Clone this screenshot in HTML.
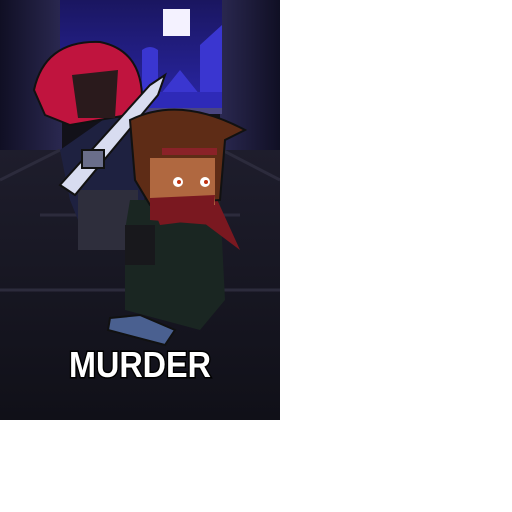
<html><head><style>body{margin:0;background:#fff;width:512px;height:512px;overflow:hidden}svg{position:absolute;left:0;top:0}</style></head><body>
<svg width="280" height="420" viewBox="0 0 280 420">
<defs>
<linearGradient id="sky" x1="0" y1="0" x2="0" y2="1"><stop offset="0" stop-color="#1a1660"/><stop offset="1" stop-color="#2a26a8"/></linearGradient>
<linearGradient id="wall" x1="0" y1="0" x2="1" y2="0"><stop offset="0" stop-color="#100f24"/><stop offset="1" stop-color="#2a2850"/></linearGradient>
<linearGradient id="wallr" x1="1" y1="0" x2="0" y2="0"><stop offset="0" stop-color="#100f24"/><stop offset="1" stop-color="#2a2850"/></linearGradient>
<linearGradient id="floor" x1="0" y1="0" x2="0" y2="1"><stop offset="0" stop-color="#1e1d2c"/><stop offset="1" stop-color="#101018"/></linearGradient>
</defs>
<rect width="280" height="420" fill="#121119"/>
<rect x="0" y="0" width="62" height="180" fill="url(#wall)"/>
<rect x="220" y="0" width="60" height="180" fill="url(#wallr)"/>
<rect x="60" y="0" width="162" height="110" fill="url(#sky)"/>
<path d="M142 95 V50 q8-6 16 0 V95 Z M200 95 V45 l22-20 V95 Z M160 95 l20-25 20 25Z" fill="#3a36d0"/>
<rect x="60" y="92" width="162" height="18" fill="#2e2ab8"/>
<rect x="163" y="9" width="27" height="27" fill="#f4f2ff"/>
<rect x="60" y="108" width="162" height="6" fill="#4a4680"/>
<rect x="0" y="150" width="280" height="270" fill="url(#floor)"/>
<path d="M0 180 L60 150 M280 180 L222 150 M0 290 H280 M40 215 H240" stroke="#2c2b3c" stroke-width="3" fill="none"/>
<path d="M60 150 L110 115 L150 130 L140 250 L90 250 L70 200 Z" fill="#1e2140"/>
<rect x="78" y="190" width="60" height="60" fill="#2e2e3c"/>
<path d="M34 90 Q45 40 100 42 Q140 50 142 95 L128 115 L70 125 L45 115 Z" fill="#c0143e" stroke="#111" stroke-width="2"/>
<path d="M72 75 L118 70 L115 118 L78 118 Z" fill="#2a1a1c"/>
<path d="M60 185 L150 85 L165 75 L158 95 L75 195 Z" fill="#d8dcf0" stroke="#111" stroke-width="2"/>
<rect x="82" y="150" width="22" height="18" fill="#6a6e8a" stroke="#111" stroke-width="2"/>
<path d="M130 200 L220 200 L225 300 L200 330 L125 310 L125 230 Z" fill="#1a2622"/>
<path d="M150 200 L215 195 L240 250 L200 220 L160 225 Z" fill="#7a1820"/>
<path d="M130 120 Q180 95 245 130 L225 140 L220 200 L150 205 L135 180 Z" fill="#5e2c16" stroke="#111" stroke-width="2"/>
<rect x="150" y="150" width="65" height="55" fill="#b06840"/>
<rect x="145" y="140" width="75" height="18" fill="#5e2c16"/>
<rect x="162" y="148" width="55" height="7" fill="#8a2228"/>
<path d="M150 198 L215 195 L212 225 L150 220 Z" fill="#7a1820"/>
<circle cx="178" cy="182" r="5" fill="#fff"/><circle cx="205" cy="182" r="5" fill="#fff"/>
<circle cx="179" cy="182" r="2" fill="#c03010"/><circle cx="206" cy="182" r="2" fill="#c03010"/>
<rect x="125" y="225" width="30" height="40" fill="#18181c"/>
<path d="M110 318 L140 315 L175 330 L165 345 L108 330 Z" fill="#4a6090" stroke="#111" stroke-width="2"/>
<text x="140" y="377" text-anchor="middle" font-family="Liberation Sans, sans-serif" font-weight="bold" font-size="36" fill="#fff" stroke="#000" stroke-width="3" paint-order="stroke" textLength="142" lengthAdjust="spacingAndGlyphs">MURDER</text>
</svg>
</body></html>
